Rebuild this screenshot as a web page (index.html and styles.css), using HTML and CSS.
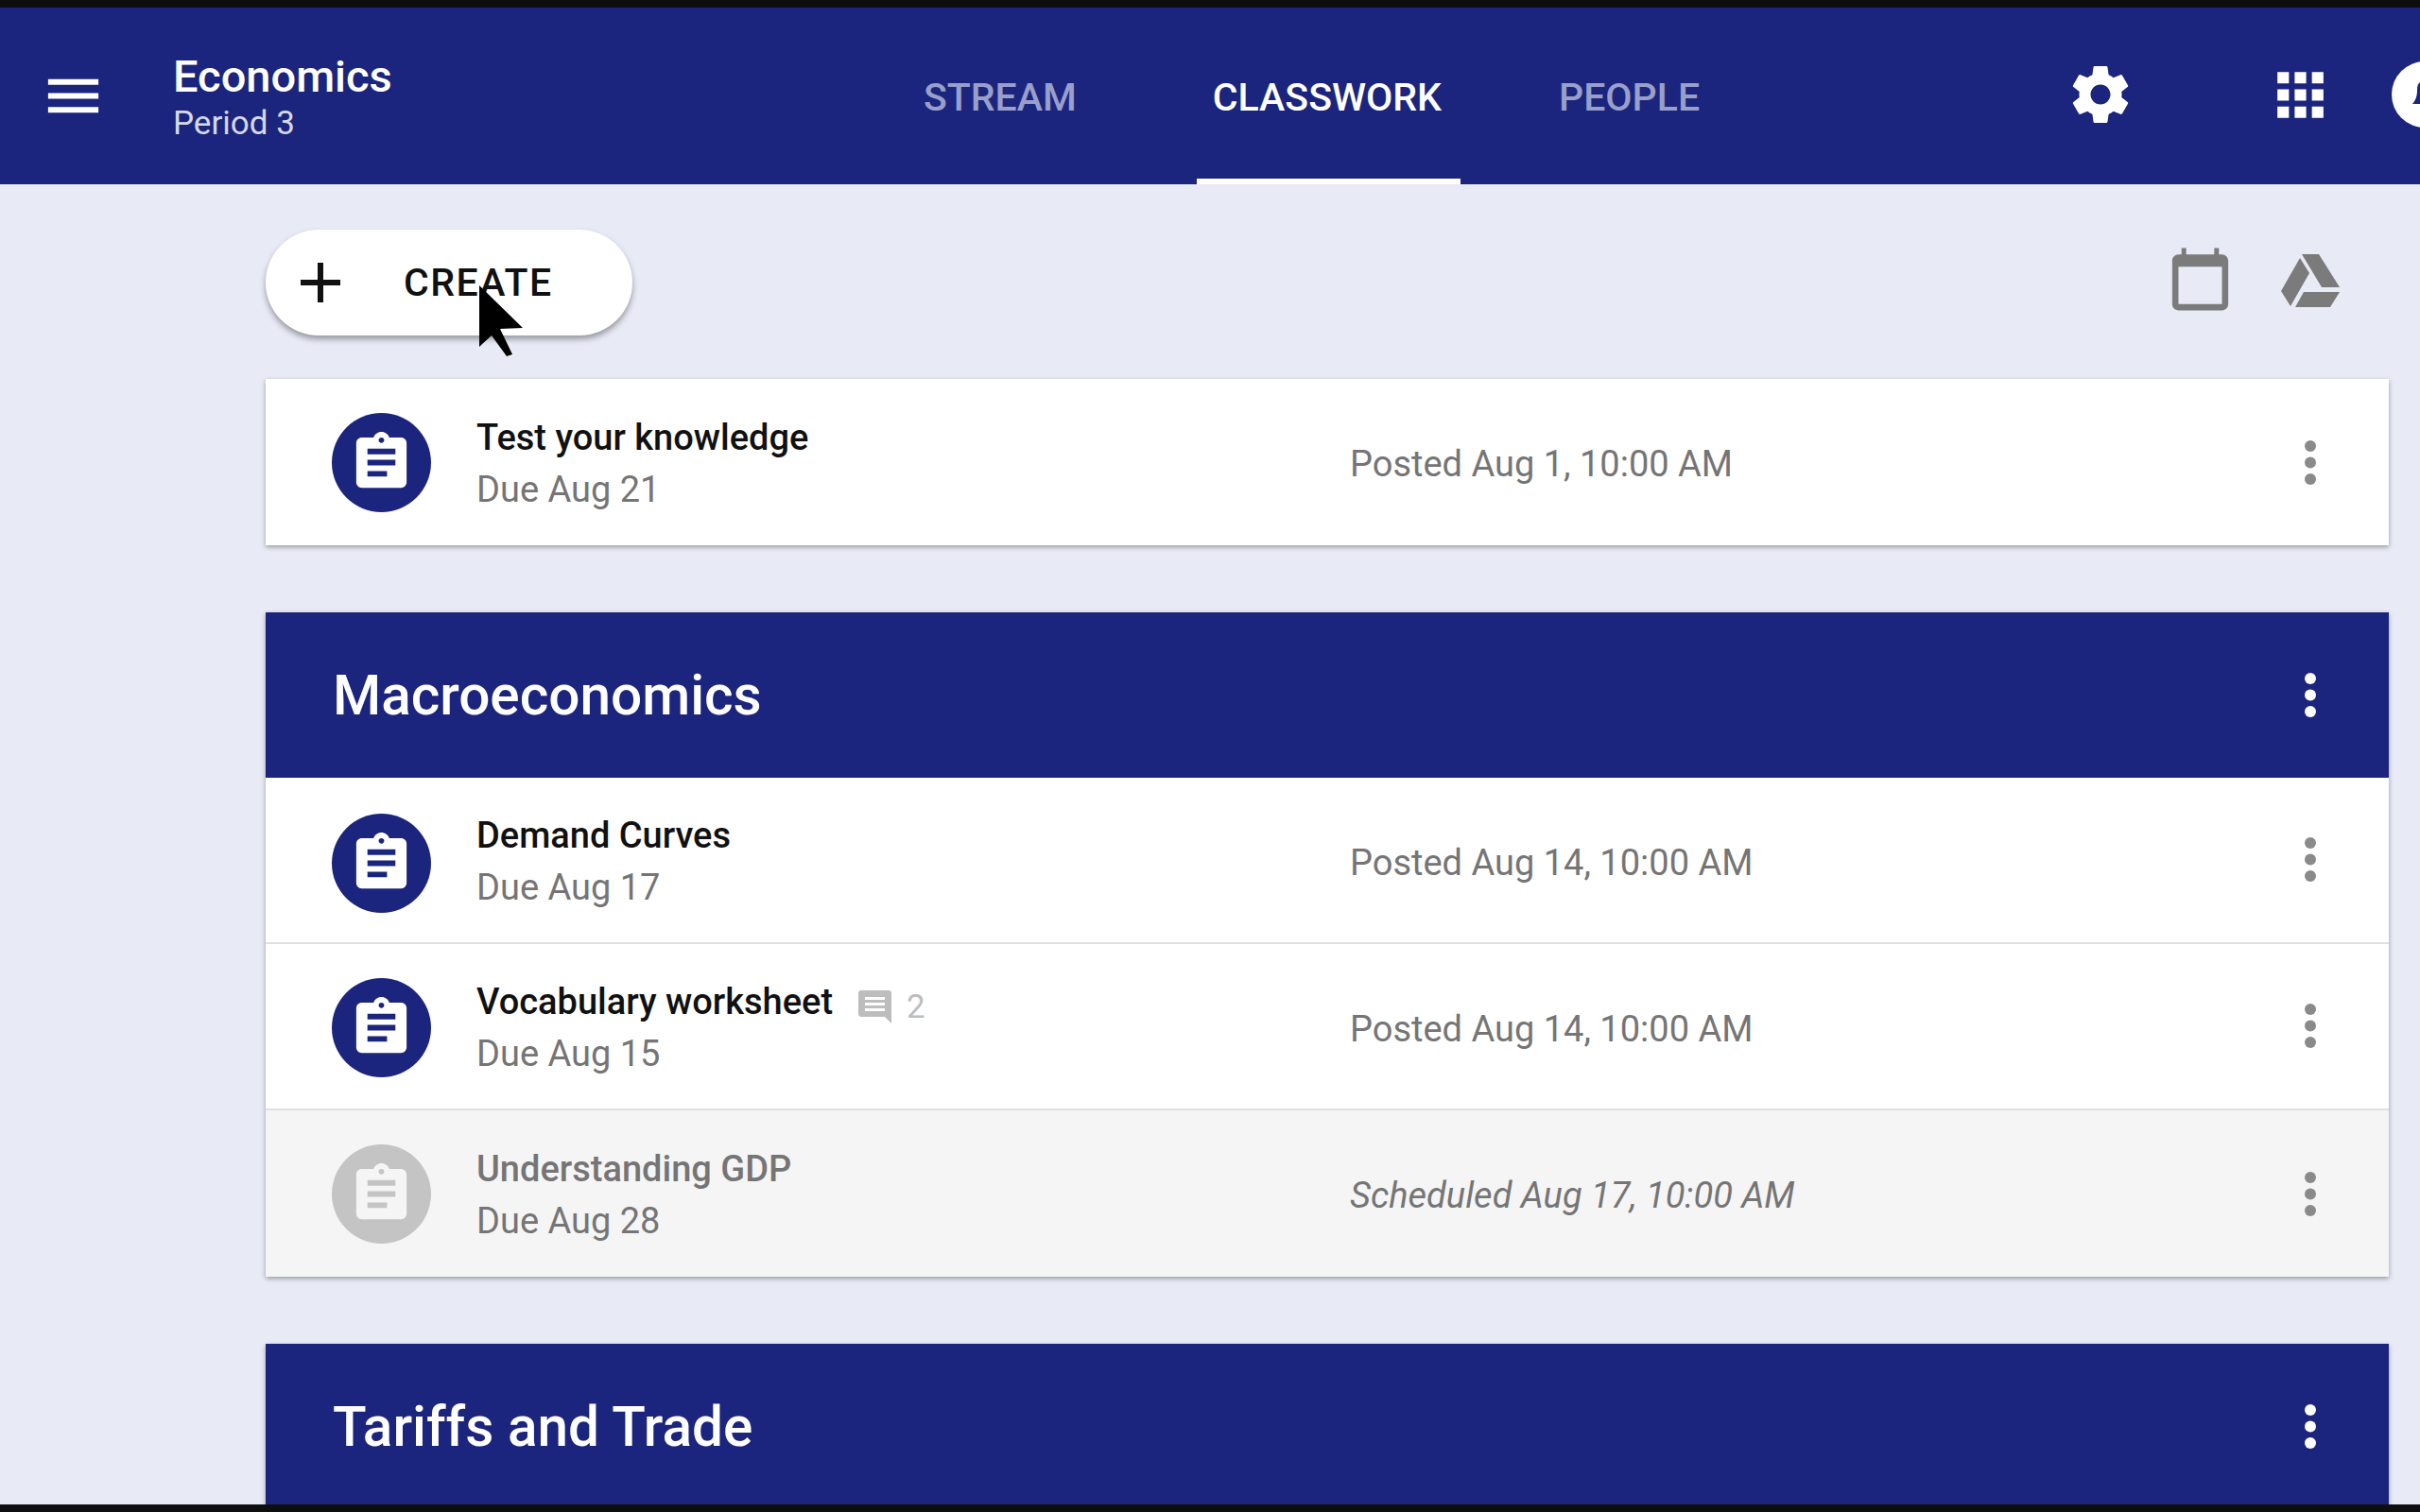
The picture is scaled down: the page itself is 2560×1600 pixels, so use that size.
FILE: index.html
```html
<!DOCTYPE html>
<html lang="en">
<head>
    <meta charset="UTF-8">
    <title>Economics - Classwork</title>
    <link rel="stylesheet" href="styles.css">
</head>
<body>
    <svg class="icon-defs" width="0" height="0">
        <symbol id="i-assignment" viewBox="0 0 24 24"><path d="M19 3h-4.18C14.4 1.84 13.3 1 12 1c-1.3 0-2.4.84-2.82 2H5c-1.1 0-2 .9-2 2v14c0 1.1.9 2 2 2h14c1.1 0 2-.9 2-2V5c0-1.1-.9-2-2-2zm-7 0c.55 0 1 .45 1 1s-.45 1-1 1-1-.45-1-1 .45-1 1-1zm2 14H7v-2h7v2zm3-4H7v-2h10v2zm0-4H7V7h10v2z"/></symbol>
        <symbol id="i-more" viewBox="0 0 12 47"><circle cx="6" cy="6" r="6"/><circle cx="6" cy="23.5" r="6"/><circle cx="6" cy="41" r="6"/></symbol>
    </svg>
    <div class="app">
        <header class="topbar">
            <svg class="menu-icon" viewBox="0 0 24 24"><path d="M3 18h18v-2H3v2zm0-5h18v-2H3v2zm0-7v2h18V6H3z"/></svg>
            <div class="class-name">
                <div class="class-title">Economics</div>
                <div class="class-period">Period 3</div>
            </div>
            <nav class="tabs">
                <a class="tab">STREAM</a>
                <a class="tab tab-active">CLASSWORK</a>
                <a class="tab">PEOPLE</a>
            </nav>
            <svg class="gear-icon" viewBox="0 0 24 24"><path d="M19.43 12.98c.04-.32.07-.64.07-.98s-.03-.66-.07-.98l2.11-1.65c.19-.15.24-.42.12-.64l-2-3.46c-.12-.22-.39-.3-.61-.22l-2.49 1c-.52-.4-1.08-.73-1.69-.98l-.38-2.65C14.46 2.18 14.25 2 14 2h-4c-.25 0-.46.18-.49.42l-.38 2.65c-.61.25-1.17.59-1.69.98l-2.49-1c-.23-.09-.49 0-.61.22l-2 3.46c-.13.22-.07.49.12.64l2.11 1.65c-.04.32-.07.65-.07.98s.03.66.07.98l-2.11 1.65c-.19.15-.24.42-.12.64l2 3.46c.12.22.39.3.61.22l2.49-1c.52.4 1.08.73 1.69.98l.38 2.65c.03.24.24.42.49.42h4c.25 0 .46-.18.49-.42l.38-2.65c.61-.25 1.17-.59 1.69-.98l2.49 1c.23.09.49 0 .61-.22l2-3.46c.12-.22.07-.49-.12-.64l-2.11-1.65zM12 15.5c-1.93 0-3.5-1.57-3.5-3.5s1.57-3.5 3.5-3.5 3.5 1.57 3.5 3.5-1.57 3.5-3.5 3.5z"/></svg>
            <svg class="apps-icon" viewBox="0 0 24 24"><path d="M4 8h4V4H4v4zm6 12h4v-4h-4v4zm-6 0h4v-4H4v4zm0-6h4v-4H4v4zm6 0h4v-4h-4v4zm6-10v4h4V4h-4zm-6 4h4V4h-4v4zm6 6h4v-4h-4v4zm0 6h4v-4h-4v4z"/></svg>
            <div class="avatar">
                <svg class="avatar-face" viewBox="0 0 70 70"><path d="M22 45c4-5 5-9 5-15 0-5 2-8 5-9v24z"/></svg>
            </div>
        </header>

        <main class="content">
            <div class="toolbar">
                <div class="create-wrap">
                    <button class="create-btn">
                        <svg class="plus-icon" viewBox="0 0 42 42"><path d="M18 0h6v18h18v6H24v18h-6V24H0v-6h18z"/></svg>
                        <span>CREATE</span>
                    </button>
                    <svg class="cursor" viewBox="0 0 46 75"><polygon points="0,0 0,65 13,53 29,75 35,73 22,46 46,45"/></svg>
                </div>
                <div class="tools">
                    <svg class="calendar-icon" viewBox="0 0 24 24"><path d="M19 4h-1V2h-1.500v2h-9V2H6v2H5c-1.100 0-2 .9-2 2v14c0 1.100.9 2 2 2h14c1.100 0 2-.9 2-2V6c0-1.100-.9-2-2-2zm0 16H5V8h14v12z"/></svg>
                    <svg class="drive-icon" viewBox="0 0 64 57"><polygon points="23,0 41,0 63,35 44,35"/><polygon points="21,4 31,20 11,55 1,39"/><polygon points="25,40 63,40 53,56 16,56"/></svg>
                </div>
            </div>

            <section class="card">
                <div class="row">
                    <div class="badge"><svg class="badge-icon"><use href="#i-assignment"/></svg></div>
                    <div class="row-text">
                        <div class="row-title">Test your knowledge</div>
                        <div class="row-due">Due Aug 21</div>
                    </div>
                    <div class="row-posted">Posted Aug 1, 10:00 AM</div>
                    <svg class="more"><use href="#i-more"/></svg>
                </div>
            </section>

            <section class="card">
                <div class="topic">
                    <h2>Macroeconomics</h2>
                    <svg class="more more-white"><use href="#i-more"/></svg>
                </div>
                <div class="row row-line row-top">
                    <div class="badge"><svg class="badge-icon"><use href="#i-assignment"/></svg></div>
                    <div class="row-text">
                        <div class="row-title">Demand Curves</div>
                        <div class="row-due">Due Aug 17</div>
                    </div>
                    <div class="row-posted">Posted Aug 14, 10:00 AM</div>
                    <svg class="more"><use href="#i-more"/></svg>
                </div>
                <div class="row row-line">
                    <div class="badge"><svg class="badge-icon"><use href="#i-assignment"/></svg></div>
                    <div class="row-text">
                        <div class="row-title">Vocabulary worksheet
                            <span class="comments">
                                <svg class="comment-icon" viewBox="0 0 35 35"><path d="M3 0h29c1.700 0 3 1.300 3 3v32l-7-7H3c-1.700 0-3-1.300-3-3V3C0 1.300 1.300 0 3 0zm4 7v3h21V7H7zm0 6v3h21v-3H7zm0 6v3h21v-3H7z"/></svg>
                                <span>2</span>
                            </span>
                        </div>
                        <div class="row-due">Due Aug 15</div>
                    </div>
                    <div class="row-posted">Posted Aug 14, 10:00 AM</div>
                    <svg class="more"><use href="#i-more"/></svg>
                </div>
                <div class="row row-scheduled">
                    <div class="badge"><svg class="badge-icon"><use href="#i-assignment"/></svg></div>
                    <div class="row-text">
                        <div class="row-title">Understanding GDP</div>
                        <div class="row-due">Due Aug 28</div>
                    </div>
                    <div class="row-posted">Scheduled Aug 17, 10:00 AM</div>
                    <svg class="more"><use href="#i-more"/></svg>
                </div>
            </section>

            <section class="card card-last">
                <div class="topic">
                    <h2>Tariffs and Trade</h2>
                    <svg class="more more-white"><use href="#i-more"/></svg>
                </div>
            </section>
        </main>
    </div>
</body>
</html>
```

FILE: styles.css
```css
* {
    margin: 0;
    padding: 0;
    box-sizing: border-box;
}
body {
    height: 1600px;
    padding: 8px 0;
    overflow: hidden;
    background-color: #0e0e0e;
    font-family: Roboto, "Liberation Sans", sans-serif;
}
.icon-defs {
    position: absolute;
}
.app {
    height: 1584px;
    overflow: hidden;
    background-color: #e8eaf6;
}

/* top bar */
.topbar {
    height: 187px;
    display: flex;
    align-items: center;
    background-color: #1b257d;
    color: white;
    fill: white;
}
.menu-icon {
    width: 71px;
    height: 71px;
    margin-left: 42px;
    flex: none;
}
.class-name {
    margin-left: 70px;
    padding-top: 3px;
    width: 777px;
    flex: none;
}
.class-title {
    font-size: 47px;
    font-weight: 500;
    line-height: 52px;
}
.class-period {
    margin-top: 3px;
    font-size: 35px;
    line-height: 42px;
    color: #d6d8ec;
}
.tabs {
    display: flex;
    height: 100%;
    flex: none;
}
.tab {
    display: flex;
    align-items: center;
    padding: 8px 17px 0;
    font-size: 41px;
    font-weight: 500;
    color: #989fcb;
    border-bottom: 6px solid transparent;
}
.tab:first-child {
    margin-right: 110px;
}
.tab-active {
    padding-right: 20px;
    margin-right: 87px;
    color: white;
    border-bottom-color: white;
}
.gear-icon {
    width: 72px;
    height: 72px;
    margin-left: 371px;
    margin-bottom: 3px;
    flex: none;
}
.apps-icon {
    width: 73px;
    height: 73px;
    margin-left: 139px;
    margin-bottom: 3px;
    flex: none;
}
.avatar {
    width: 70px;
    height: 70px;
    margin-left: 60px;
    margin-bottom: 3px;
    border-radius: 50%;
    background-color: white;
    overflow: hidden;
    flex: none;
}
.avatar-face {
    width: 70px;
    height: 70px;
    fill: #1b257d;
}

/* create button and tools */
.content {
    padding: 48px 33px 0 281px;
}
.toolbar {
    display: flex;
    justify-content: space-between;
    align-items: center;
    height: 112px;
    margin-bottom: 46px;
}
.create-wrap {
    position: relative;
}
.create-btn {
    display: flex;
    align-items: center;
    width: 388px;
    height: 112px;
    padding-left: 37px;
    border: none;
    border-radius: 56px;
    background-color: white;
    box-shadow: 0 4px 6px rgba(0, 0, 0, 0.35);
    font-family: inherit;
    font-size: 41px;
    font-weight: 500;
    letter-spacing: 1.5px;
    color: #111;
}
.plus-icon {
    width: 42px;
    height: 42px;
    margin-right: 67px;
    fill: #111;
}
.cursor {
    position: absolute;
    left: 226px;
    top: 59px;
    width: 46px;
    height: 75px;
    fill: black;
}
.tools {
    display: flex;
    align-items: center;
    fill: #7b7b7b;
    padding-right: 51px;
    margin-bottom: 7px;
}
.calendar-icon {
    width: 79px;
    height: 79px;
    margin-right: 45px;
}
.drive-icon {
    width: 64px;
    height: 57px;
    margin-top: 3px;
}

/* cards */
.card {
    margin-bottom: 71px;
    background-color: white;
    box-shadow: 0 2px 5px rgba(0, 0, 0, 0.35);
}
.card-last {
    margin-bottom: 0;
}
.row {
    display: flex;
    align-items: center;
    height: 176px;
    padding-left: 70px;
}
.row-line {
    border-bottom: 2px solid #e0e0e0;
}
.row-line .badge {
    margin-top: 2px;
}
.row-line .more {
    margin-bottom: 2px;
}
.row-line .row-posted {
    margin-top: 6px;
}
.row-top .badge {
    margin-top: 6px;
}
.badge {
    width: 105px;
    height: 105px;
    border-radius: 50%;
    background-color: #1b257d;
    display: flex;
    align-items: center;
    justify-content: center;
    flex: none;
}
.badge-icon {
    width: 71px;
    height: 71px;
    fill: white;
}
.row-text {
    width: 924px;
    margin-left: 48px;
    margin-top: 3px;
    flex: none;
}
.row-title {
    font-size: 38px;
    font-weight: 500;
    line-height: 54px;
    color: #111;
    display: flex;
    align-items: center;
}
.row-due {
    font-size: 38px;
    line-height: 56px;
    color: #757575;
}
.row-posted {
    flex: 1;
    margin-top: 4px;
    font-size: 38px;
    color: #757575;
}
.comments {
    display: flex;
    align-items: center;
    height: 35px;
    margin: 6px 0 -6px 27px;
    font-size: 35px;
    font-weight: 400;
    color: #bdbdbd;
    fill: #bdbdbd;
}
.comment-icon {
    width: 35px;
    height: 35px;
    margin-right: 16px;
}
.more {
    width: 12px;
    height: 47px;
    margin-right: 77px;
    fill: #8a8a8a;
    flex: none;
}
.more-white {
    fill: white;
}
.row-scheduled {
    background-color: #f5f5f5;
}
.row-scheduled .badge {
    background-color: #c4c4c4;
}
.row-scheduled .badge-icon {
    fill: #f5f5f5;
}
.row-scheduled .row-title {
    color: #757575;
}
.row-scheduled .row-posted {
    font-style: italic;
}

/* topic header */
.topic {
    display: flex;
    align-items: center;
    justify-content: space-between;
    height: 175px;
    padding-left: 71px;
    background-color: #1b257d;
    color: white;
}
.topic h2 {
    font-size: 58.5px;
    font-weight: 500;
}
```
